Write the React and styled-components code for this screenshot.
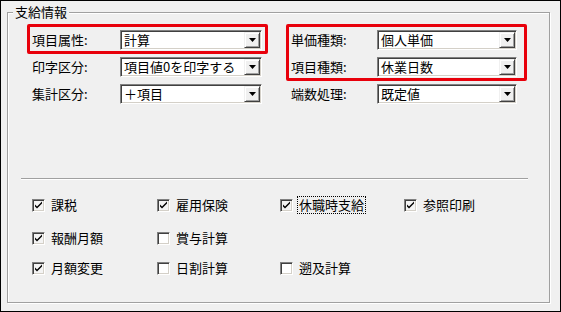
import styled, { createGlobalStyle } from "styled-components";

const GlobalStyle = createGlobalStyle`
  body {
    margin: 0;
    background: #f0f0f0;
    font-family: "Noto Sans CJK JP", "Noto Sans", sans-serif;
  }
`;

const Frame = styled.div`
  width: 561px;
  height: 312px;
  box-sizing: border-box;
  border: 1px solid #000;
  background: #f0f0f0;
  padding: 11px 0 0 6px;
`;

const Group = styled.div`
  position: relative;
  width: 543px;
  height: 291px;
  box-sizing: border-box;
  border: 1px solid #a0a0a0;
  box-shadow: inset 1px 1px 0 #fff, 1px 1px 0 #fff;
  padding: 17px 0 0 22px;
`;

const Legend = styled.span`
  position: absolute;
  top: -9px;
  left: 5px;
  padding: 0 2px;
  background: #f0f0f0;
  font-size: 13px;
  line-height: 16px;
  color: #000;
`;

const FormGrid = styled.div`
  display: grid;
  grid-template-columns: 235px 235px;
  column-gap: 24px;
  align-items: start;
`;

const Column = styled.div`
  display: flex;
  flex-direction: column;
  gap: 7px;
`;

const Highlight = styled.div`
  display: flex;
  flex-direction: column;
  gap: 7px;
  margin: -6px -3px -4px;
  padding: 3px 0 1px;
  border: 3px solid #e8000b;
  border-radius: 2px;
`;

const Row = styled.div`
  display: flex;
  align-items: center;
  height: 20px;
  padding-left: 2px;
`;

const Label = styled.span`
  width: ${(p) => p.$w}px;
  flex: none;
  font-size: 13px;
  line-height: 18px;
  color: #000;
`;

const Combo = styled.div`
  display: flex;
  align-items: center;
  width: ${(p) => p.$w}px;
  height: 20px;
  box-sizing: border-box;
  background: #fff;
  border-top: 1px solid #808080;
  border-left: 1px solid #808080;
  border-right: 1px solid #fff;
  border-bottom: 1px solid #fff;
  box-shadow: inset 1px 1px 0 #404040, inset -1px -1px 0 #d4d0c8;
`;

const ComboText = styled.span`
  flex: 1;
  min-width: 0;
  padding-left: 3px;
  font-size: 13px;
  line-height: 18px;
  color: #000;
  white-space: nowrap;
`;

const DropButton = styled.span`
  display: flex;
  flex: none;
  align-items: center;
  justify-content: center;
  width: 16px;
  height: 16px;
  margin-right: 1px;
  box-sizing: border-box;
  background: #f0f0f0;
  border-top: 1px solid #f0f0f0;
  border-left: 1px solid #f0f0f0;
  border-right: 1px solid #404040;
  border-bottom: 1px solid #404040;
  box-shadow: inset 1px 1px 0 #fff, inset -1px -1px 0 #a0a0a0;
`;

const Separator = styled.div`
  width: 507px;
  margin: 74px 0 0 -9px;
  border-top: 1px solid #a0a0a0;
  border-bottom: 1px solid #fff;
`;

const CheckGrid = styled.div`
  display: grid;
  grid-template-columns: 125px 123px 124px 124px;
  grid-template-rows: 33px 30px 20px;
  margin: 15px 0 0 2px;
`;

const CheckItem = styled.label`
  display: flex;
  align-items: center;
  gap: 5px;
  height: 20px;
  font-size: 13px;
  line-height: 16px;
  color: #000;
  grid-column: ${(p) => p.$col};
  grid-row: ${(p) => p.$row};
`;

const Box = styled.span`
  display: flex;
  align-items: center;
  justify-content: center;
  width: 13px;
  height: 13px;
  box-sizing: border-box;
  background: ${(p) => (p.$on ? "#f4f4f4" : "#fff")};
  border-top: 1px solid #808080;
  border-left: 1px solid #808080;
  border-right: 1px solid #fff;
  border-bottom: 1px solid #fff;
  box-shadow: inset 1px 1px 0 #404040, inset -1px -1px 0 #d4d0c8;
`;

const CheckText = styled.span`
  padding: 0 1px;
  outline: ${(p) => (p.$focus ? "1px dotted #000" : "none")};
`;

const Arrow = () => (
  <svg width="7" height="4" viewBox="0 0 7 4">
    <path d="M0 0h7L3.5 4z" fill="#000" />
  </svg>
);

const Tick = () => (
  <svg width="9" height="9" viewBox="0 0 9 9">
    <path d="M1 3.5l2 2 5-5v2l-5 5-2-2z" fill="#000" />
  </svg>
);

const Select = ({ w, value }) => (
  <Combo $w={w}>
    <ComboText>{value}</ComboText>
    <DropButton>
      <Arrow />
    </DropButton>
  </Combo>
);

const Field = ({ label, lw, cw, value }) => (
  <Row>
    <Label $w={lw}>{label}</Label>
    <Select w={cw} value={value} />
  </Row>
);

const checks = [
  { text: "課税", on: true, col: 1, row: 1 },
  { text: "雇用保険", on: true, col: 2, row: 1 },
  { text: "休職時支給", on: true, col: 3, row: 1, focus: true },
  { text: "参照印刷", on: true, col: 4, row: 1 },
  { text: "報酬月額", on: true, col: 1, row: 2 },
  { text: "賞与計算", on: false, col: 2, row: 2 },
  { text: "月額変更", on: true, col: 1, row: 3 },
  { text: "日割計算", on: false, col: 2, row: 3 },
  { text: "遡及計算", on: false, col: 3, row: 3 },
];

export default function App() {
  return (
    <>
      <GlobalStyle />
      <Frame>
        <Group>
          <Legend>支給情報</Legend>
          <FormGrid>
            <Column>
              <Highlight>
                <Field label="項目属性:" lw={88} cw={142} value="計算" />
              </Highlight>
              <Field label="印字区分:" lw={88} cw={142} value="項目値0を印字する" />
              <Field label="集計区分:" lw={88} cw={142} value="＋項目" />
            </Column>
            <Column>
              <Highlight>
                <Field label="単価種類:" lw={86} cw={140} value="個人単価" />
                <Field label="項目種類:" lw={86} cw={140} value="休業日数" />
              </Highlight>
              <Field label="端数処理:" lw={86} cw={140} value="既定値" />
            </Column>
          </FormGrid>
          <Separator />
          <CheckGrid>
            {checks.map((c) => (
              <CheckItem key={c.text} $col={c.col} $row={c.row}>
                <Box $on={c.on}>{c.on && <Tick />}</Box>
                <CheckText $focus={c.focus}>{c.text}</CheckText>
              </CheckItem>
            ))}
          </CheckGrid>
        </Group>
      </Frame>
    </>
  );
}
